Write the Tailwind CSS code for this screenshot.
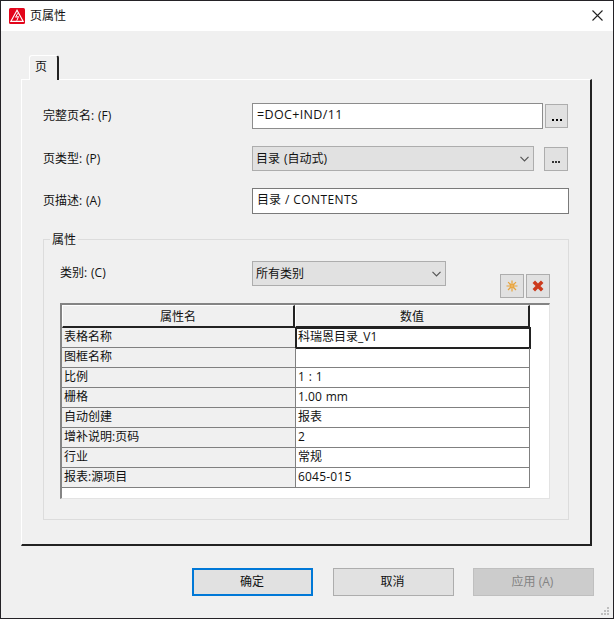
<!DOCTYPE html>
<html lang="zh-CN">
<head>
<meta charset="utf-8">
<title>页属性</title>
<script src="https://cdn.jsdelivr.net/npm/@tailwindcss/browser@4"></script>
</head>
<body class="font-['Open_Sans','Noto_Sans_CJK_SC',sans-serif] text-[12px] leading-[18px] text-[#111] overflow-hidden [word-spacing:0.8px]">
<div class="relative w-[614px] h-[619px] border border-[#242226] bg-[#f0f0f0] flex flex-col">
  <header class="h-[30px] shrink-0 bg-white flex items-center pl-2 pr-[10px]">
    <svg class="w-4 h-4 -mt-px" viewBox="0 0 16 16" fill="none"><rect width="16" height="16" rx="1.5" fill="#e3051b"/><path d="M8 2.2 1.8 13.4h12.4z" stroke="#fff" stroke-width="1.1"/><path d="M8.7 5.3 6.6 9.2l2.9-.6-1.7 4.1" stroke="#fff"/></svg>
    <h1 class="ml-[5px] -mt-px">页属性</h1>
    <svg class="ml-auto w-[11px] h-[11px] -mt-[2px]" viewBox="0 0 11 11" stroke="#222" stroke-width="1.1"><path d="M.5.5l10 10M10.500.5l-10 10"/></svg>
  </header>

  <div class="h-[25px] mt-6 -mb-px ml-7 w-[30px] shrink-0 relative z-10 rounded-t-[3px] border-t border-l border-white border-r-2 border-r-[#222] bg-[#f0f0f0] pl-[5px] pt-[2px]">页</div>

  <main class="ml-5 w-[571px] h-[467px] shrink-0 border border-white border-r-2 border-r-[#222] border-b-2 border-b-[#222] pl-[21px] pt-[23px]">
    <div class="flex h-[26px] items-center">
      <label class="w-[209px]">完整页名: (F)</label>
      <div class="w-[291px] h-[26px] border border-[#8c8c8c] bg-white pl-1 pt-[2px] text-[12.5px] tracking-[0.35px]">=DOC+IND/11</div>
      <button class="ml-[2px] w-[23px] h-6 bg-[#e1e1e1] border border-[#adadad] flex items-center justify-center gap-[2px] pt-[7px]"><i class="size-[2px] bg-black"></i><i class="size-[2px] bg-black"></i><i class="size-[2px] bg-black"></i></button>
    </div>
    <div class="flex h-[25px] items-center mt-[17px]">
      <label class="w-[209px]">页类型: (P)</label>
      <div class="w-[282px] h-[25px] border border-[#adadad] bg-[#e1e1e1] pl-[3px] pr-1 flex items-center">目录 (自动式)<svg class="ml-auto w-[9px] h-[6px]" viewBox="0 0 9 6" fill="none" stroke="#555" stroke-width="1.2"><path d="M.5.8l4 4 4-4"/></svg></div>
      <button class="ml-[10px] w-6 h-6 bg-[#e1e1e1] border border-[#adadad] flex items-center justify-center gap-[1px] pt-[6px]"><i class="size-[2px] bg-[#333]"></i><i class="size-[2px] bg-[#333]"></i><i class="size-[2px] bg-[#333]"></i></button>
    </div>
    <div class="flex h-[26px] items-center mt-[17px]">
      <label class="w-[209px]">页描述: (A)</label>
      <div class="w-[317px] h-[26px] border border-[#7a7a7a] bg-white pl-1 pt-[2px]">目录 / <span class="tracking-[0.4px]">CONTENTS</span></div>
    </div>

    <section class="relative mt-[25px] w-[526px] h-[281px] border border-[#dcdcdc] pl-4">
      <h2 class="absolute left-[6px] top-[-9px] px-[2px] bg-[#f0f0f0]">属性</h2>
      <div class="flex h-[63px]">
        <label class="w-[192px] pt-[24px]">类别: (C)</label>
        <div class="mt-[21px] w-[194px] h-[25px] border border-[#adadad] bg-[#e1e1e1] pl-[3px] pr-1 flex items-center">所有类别<svg class="ml-auto w-[9px] h-[6px]" viewBox="0 0 9 6" fill="none" stroke="#555" stroke-width="1.2"><path d="M.5.8l4 4 4-4"/></svg></div>
        <button class="mt-[34px] ml-[54px] size-6 bg-[#e1e1e1] border border-[#adadad] flex items-center justify-center"><svg class="size-3" viewBox="0 0 12 12" fill="none" stroke="#e8a33a"><path d="M6 .5v3M6 8.500v3M.5 6h3M8.500 6h3M2.100 2.100l2 2M8 8l2 2M10 2.100l-2 2M4 8l-2 2" stroke-width="1.2"/><rect x="4.200" y="4.200" width="3.600" height="3.600" fill="#f0b45c" stroke-width="1.2"/></svg></button>
        <button class="mt-[34px] ml-[2px] size-6 bg-[#e1e1e1] border border-[#adadad] flex items-center justify-center"><svg class="size-3" viewBox="0 0 12 12" stroke="#cc3a1c" stroke-width="3.500"><path d="M1.800 1.800l8.400 8.400M10.200 1.800l-8.400 8.400"/></svg></button>
      </div>
      <div class="w-[490px] h-[196px] border-t-2 border-l-2 border-r border-b border-t-[#848484] border-l-[#848484] border-r-[#e3e3e3] border-b-[#e3e3e3] bg-white">
        <div class="w-[468px] grid grid-cols-[233px_235px] *:h-[23px] *:bg-[#f0f0f0] *:border-t *:border-l *:border-t-white *:border-l-white *:border-b-2 *:border-r-2 *:border-b-[#222] *:border-r-[#222] *:text-center *:pt-[2px]">
          <div>属性名</div>
          <div>数值</div>
        </div>
        <div class="w-[468px] grid grid-cols-[234px_234px] auto-rows-[20px] leading-[17px] *:border-b *:border-r *:border-[#808080] *:pl-[2px]">
          <div class="bg-[#f0f0f0]">表格名称</div><div class="outline-2 outline-[#222] outline-solid -outline-offset-1">科瑞恩目录_V1</div>
          <div class="bg-[#f0f0f0]">图框名称</div><div></div>
          <div class="bg-[#f0f0f0]">比例</div><div>1 : 1</div>
          <div class="bg-[#f0f0f0]">栅格</div><div>1.00 mm</div>
          <div class="bg-[#f0f0f0]">自动创建</div><div>报表</div>
          <div class="bg-[#f0f0f0]">增补说明:页码</div><div>2</div>
          <div class="bg-[#f0f0f0]">行业</div><div>常规</div>
          <div class="bg-[#f0f0f0]">报表:源项目</div><div class="tracking-[0.2px]">6045-015</div>
        </div>
      </div>
    </section>
  </main>

  <footer class="mt-[22px] ml-[191px] flex h-7 items-stretch">
    <button class="w-[121px] bg-[#e1e1e1] border-2 border-[#0078d7] pr-px">确定</button>
    <button class="w-[121px] ml-5 bg-[#e1e1e1] border border-[#adadad] pr-[2px]">取消</button>
    <button class="w-[121px] ml-[19px] bg-[#ccc] border border-[#bfbfbf] text-[#838383] pr-[2px]">应用 (A)</button>
  </footer>
  <svg class="absolute right-[4px] bottom-[3px] w-2 h-2" viewBox="0 0 8 8" fill="#bfbfbf"><path d="M6 0h2v2h-2zM3 3h2v2h-2zM6 3h2v2h-2zM0 6h2v2h-2zM3 6h2v2h-2zM6 6h2v2h-2z"/></svg>
</div>
</body>
</html>
